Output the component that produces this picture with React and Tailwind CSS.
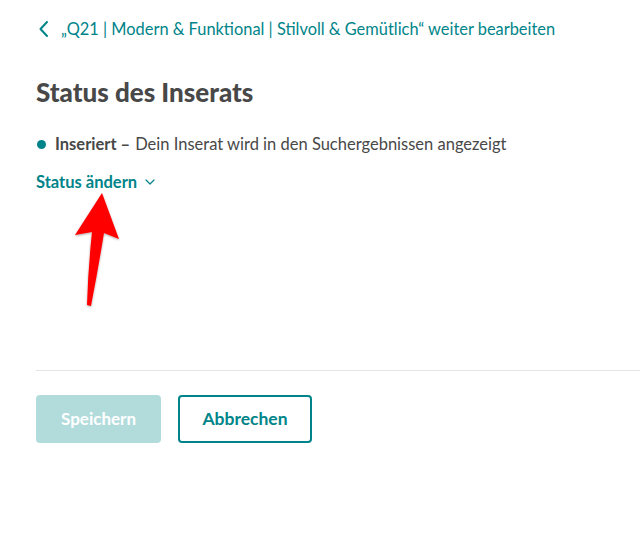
import React from "react";

export default function App() {
  return (
    <div className="relative w-[640px] h-[544px] bg-white overflow-hidden" style={{ fontFamily: 'Lato, "Noto Sans", sans-serif' }}>
      <div className="pl-[36px] pt-[18px]">
        <div className="flex items-center h-[22px] text-[#008489] text-[16.4px]">
          <svg width="12" height="18" viewBox="0 0 12 18" className="ml-[2px] mr-[11px]">
            <path d="M9 2 L2.5 9 L9 16" fill="none" stroke="#008489" strokeWidth="2" strokeLinecap="round" strokeLinejoin="round" />
          </svg>
          <span>„Q21 | Modern &amp; Funktional | Stilvoll &amp; Gemütlich“ weiter bearbeiten</span>
        </div>
        <h1 className="mt-[37px] text-[26px] font-black text-[#484848] leading-[31px]">Status des Inserats</h1>
        <div className="mt-[25px] flex items-center text-[16.5px] text-[#484848] h-[22px]">
          <span className="w-[9px] h-[9px] rounded-full bg-[#008489] ml-[1px] mr-[9px]" />
          <span className="font-bold">Inseriert –</span>
          <span className="ml-[5px]">Dein Inserat wird in den Suchergebnissen angezeigt</span>
        </div>
        <div className="mt-[16px] flex items-center text-[16.5px] font-bold text-[#008489] h-[22px]">
          <span>Status ändern</span>
          <svg width="10" height="6" viewBox="0 0 10 6" className="ml-[8px]">
            <path d="M1 1 L5 5 L9 1" fill="none" stroke="#008489" strokeWidth="1.2" strokeLinecap="round" strokeLinejoin="round" />
          </svg>
        </div>
        <div className="mt-[177px] border-t border-[#e4e4e4]" />
        <div className="mt-[24px] flex gap-[17px]">
          <button className="w-[125px] h-[48px] rounded-[4px] bg-[#b2dcdc] text-white font-bold text-[17px]">Speichern</button>
          <button className="w-[134px] h-[48px] rounded-[4px] border-2 border-[#008489] text-[#008489] font-bold text-[17.5px]">Abbrechen</button>
        </div>
      </div>
      <svg className="absolute left-0 top-0" width="640" height="544" viewBox="0 0 640 544">
        <defs>
          <filter id="sh" x="-50%" y="-50%" width="200%" height="200%">
            <feDropShadow dx="0" dy="1" stdDeviation="1.2" floodColor="#000" floodOpacity="0.35" />
          </filter>
        </defs>
        <path
          d="M102 193 L119 239 L104 233 Q98 270 91 306 L87 305 Q88 270 92 232 L75 235 Z"
          fill="#ff0000"
          filter="url(#sh)"
        />
      </svg>
    </div>
  );
}
